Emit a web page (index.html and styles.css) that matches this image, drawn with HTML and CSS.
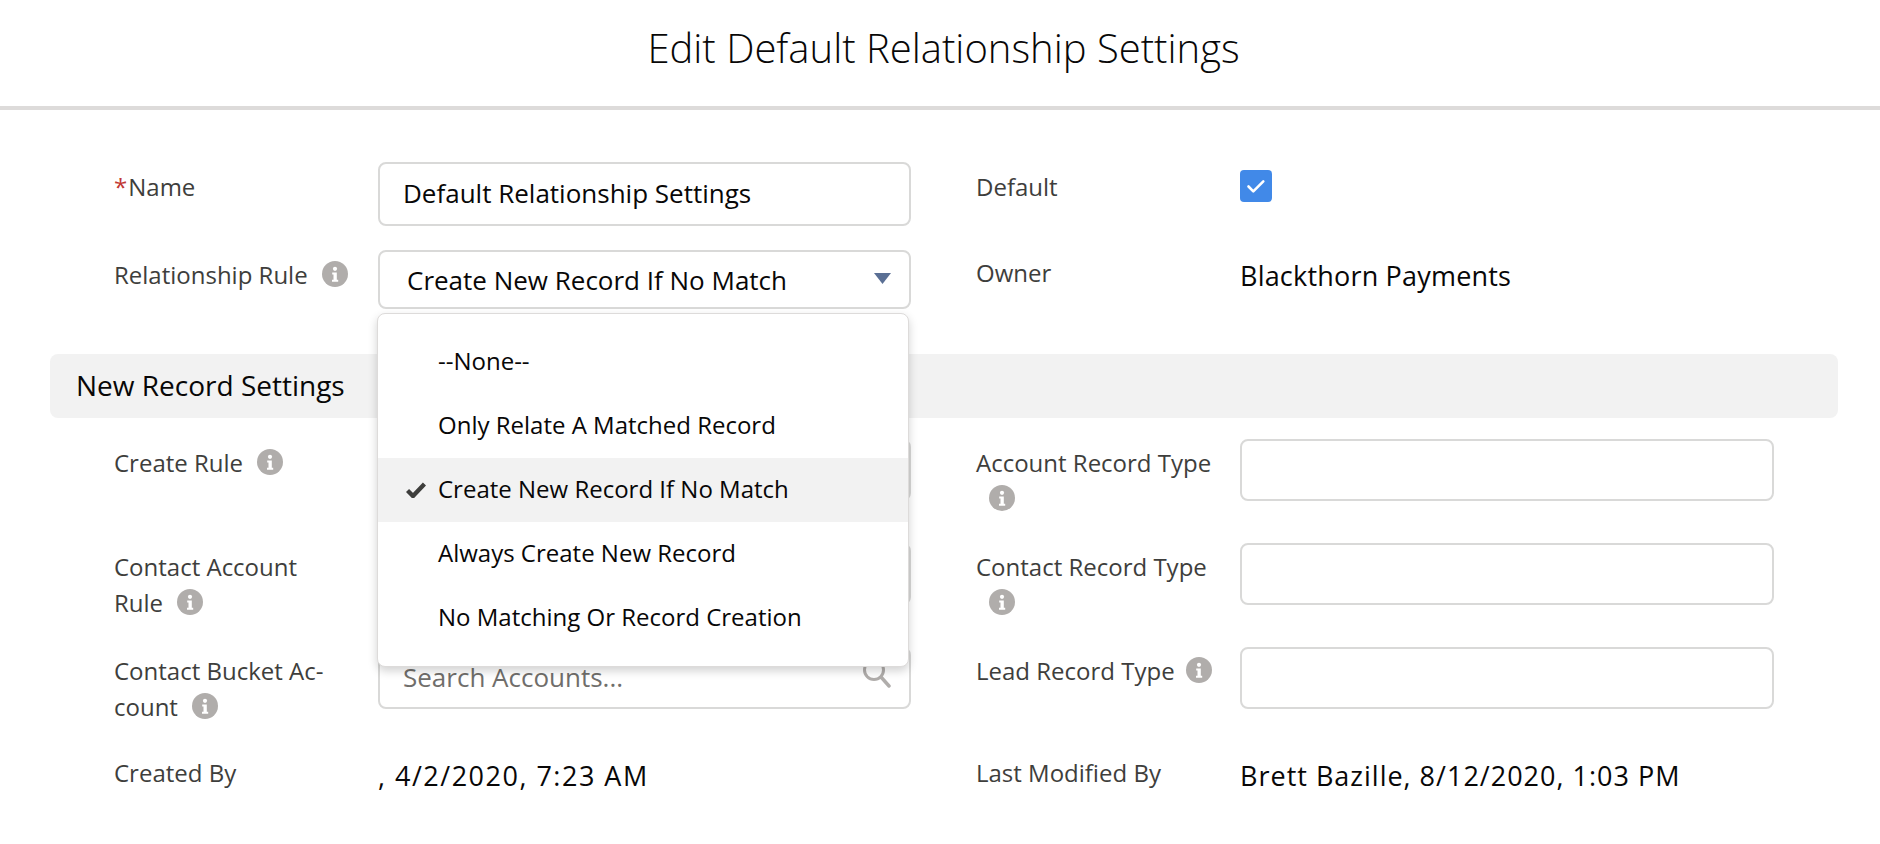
FILE: index.html
```html
<!DOCTYPE html>
<html lang="en">
<head>
    <meta charset="UTF-8">
    <title>Edit Default Relationship Settings</title>
    <link rel="stylesheet" href="styles.css">
</head>
<body>
    <svg class="sprite" width="0" height="0">
        <symbol id="info" viewBox="0 0 26 26">
            <circle cx="13" cy="13" r="13" fill="#b0adab"/>
            <circle cx="13" cy="7.8" r="2.1" fill="#fff"/>
            <path d="M10.2 11.4h4.6v7.4h1.4v2h-6.2v-2h1.5v-5.4h-1.3z" fill="#fff"/>
        </symbol>
    </svg>

    <div class="header">
        <h1>Edit Default Relationship Settings</h1>
    </div>

    <div class="row row-name">
        <div class="field">
            <div class="label"><span class="required">*</span>Name</div>
            <div class="input value-text">Default Relationship Settings</div>
        </div>
        <div class="field">
            <div class="label">Default</div>
            <div class="checkbox">
                <svg viewBox="0 0 32 32" width="32" height="32"><path d="M8.5 16.5l4.8 4.8 10-10" fill="none" stroke="#fff" stroke-width="2.6" stroke-linecap="round" stroke-linejoin="round"/></svg>
            </div>
        </div>
    </div>

    <div class="row row-rule">
        <div class="field">
            <div class="label">Relationship Rule <svg class="info"><use href="#info"/></svg></div>
            <div class="control">
                <div class="input select value-text">
                    Create New Record If No Match
                    <svg class="caret" viewBox="0 0 17 11" width="17" height="11"><path d="M0 0h17l-8.5 11z" fill="#5a6f94"/></svg>
                </div>
                <ul class="menu">
                    <li>--None--</li>
                    <li>Only Relate A Matched Record</li>
                    <li class="selected">
                        <svg class="tick" viewBox="0 0 20 16" width="20" height="16"><path d="M1.5 8.5l5.5 5.5 11.5-12" fill="none" stroke="#3e3e3c" stroke-width="4.4"/></svg>
                        Create New Record If No Match
                    </li>
                    <li>Always Create New Record</li>
                    <li>No Matching Or Record Creation</li>
                </ul>
            </div>
        </div>
        <div class="field">
            <div class="label">Owner</div>
            <div class="value">Blackthorn Payments</div>
        </div>
    </div>

    <div class="section">New Record Settings</div>

    <div class="row row-input">
        <div class="field">
            <div class="label">Create Rule <svg class="info"><use href="#info"/></svg></div>
            <div class="input"></div>
        </div>
        <div class="field">
            <div class="label">Account Record Type <svg class="info info-wrapped"><use href="#info"/></svg></div>
            <div class="input"></div>
        </div>
    </div>

    <div class="row row-input">
        <div class="field">
            <div class="label">Contact Account<br>Rule <svg class="info"><use href="#info"/></svg></div>
            <div class="input"></div>
        </div>
        <div class="field">
            <div class="label">Contact Record Type <svg class="info info-wrapped"><use href="#info"/></svg></div>
            <div class="input"></div>
        </div>
    </div>

    <div class="row row-input">
        <div class="field">
            <div class="label">Contact Bucket Ac-<br>count <svg class="info"><use href="#info"/></svg></div>
            <div class="input search">
                Search Accounts...
                <svg class="search-icon" viewBox="0 0 28 30" width="28" height="30"><circle cx="11" cy="11" r="9.5" fill="none" stroke="#b0adab" stroke-width="3"/><path d="M18 18l8 9" fill="none" stroke="#b0adab" stroke-width="3.4" stroke-linecap="round"/></svg>
            </div>
        </div>
        <div class="field">
            <div class="label">Lead Record Type <svg class="info info-lead"><use href="#info"/></svg></div>
            <div class="input"></div>
        </div>
    </div>

    <div class="row row-meta">
        <div class="field">
            <div class="label">Created By</div>
            <div class="value date created">, 4/2/2020, 7:23 AM</div>
        </div>
        <div class="field">
            <div class="label">Last Modified By</div>
            <div class="value date">Brett Bazille, 8/12/2020, 1:03 PM</div>
        </div>
    </div>
</body>
</html>
```

FILE: styles.css
```css
body {
    font-family: "Open Sans", "Liberation Sans", sans-serif;
    margin: 0;
    background-color: #fff;
    color: #080707;
}
.sprite {
    position: absolute;
}
.header {
    height: 106px;
    border-bottom: 4px solid #dddbda;
    display: flex;
    justify-content: center;
    align-items: center;
}
.header h1 {
    margin: 0 0 12px 7px;
    font-size: 40px;
    font-weight: 300;
}
.row {
    display: grid;
    grid-template-columns: 797px 798px;
    column-gap: 65px;
    padding-left: 114px;
}
.row-name {
    margin-top: 52px;
    height: 64px;
}
.row-rule {
    margin-top: 24px;
    height: 59px;
}
.row-input {
    height: 62px;
    margin-bottom: 42px;
}
.row-meta {
    margin-top: -2px;
}
.field {
    display: grid;
    grid-template-columns: 264px 1fr;
    align-items: start;
    min-width: 0;
}
.label {
    padding: 6px 16px 0 0;
    font-size: 24px;
    line-height: 36px;
    color: #3e3e3c;
}
.row-name .label {
    padding-top: 7px;
}
.row-rule .label {
    padding-top: 5px;
}
.row-rule .field:first-child .label {
    padding-top: 7px;
}
.required {
    color: #c23934;
    margin-right: 1px;
}
.info {
    width: 26px;
    height: 26px;
    margin-left: 8px;
    vertical-align: -3px;
}
.info-wrapped {
    margin-left: 13px;
}
.info-lead {
    margin-left: 5px;
}
.control {
    position: relative;
}
.input {
    box-sizing: border-box;
    height: 62px;
    border: 2px solid #d9d9d8;
    border-radius: 8px;
    background-color: #fff;
    display: flex;
    align-items: center;
    padding: 0 24px 0 23px;
}
.row-name .input {
    height: 64px;
    padding-bottom: 3px;
}
.row-rule .input {
    height: 59px;
}
.value-text {
    font-size: 26px;
}
.select {
    padding-left: 27px;
    justify-content: space-between;
}
.caret {
    margin-right: -6px;
    margin-top: -2px;
}
.value {
    padding-top: 8px;
    font-size: 27px;
    line-height: 36px;
    letter-spacing: 0.2px;
}
.date {
    padding-top: 9px;
    letter-spacing: 1px;
}
.created {
    letter-spacing: 1.5px;
}
.checkbox {
    width: 32px;
    height: 32px;
    margin-top: 8px;
    border-radius: 4px;
    background-color: #4189e8;
}
.checkbox svg {
    display: block;
}
.menu {
    position: absolute;
    z-index: 2;
    top: 63px;
    left: -1px;
    width: 532px;
    height: 354px;
    box-sizing: border-box;
    margin: 0;
    padding: 16px 0;
    list-style: none;
    background-color: #fff;
    border: 1px solid #dddbda;
    border-radius: 8px;
    box-shadow: 0 4px 10px rgba(0, 0, 0, 0.18);
    font-size: 24px;
}
.menu li {
    position: relative;
    height: 64px;
    line-height: 62px;
    padding-left: 60px;
}
.menu .selected {
    background-color: #f2f2f2;
}
.tick {
    position: absolute;
    left: 28px;
    top: 24px;
}
.section {
    box-sizing: border-box;
    height: 64px;
    margin: 45px 42px 21px 50px;
    padding-left: 26px;
    background-color: #f2f2f2;
    border-radius: 8px;
    font-size: 28px;
    line-height: 62px;
}
.search {
    padding-bottom: 2px;
    font-size: 26px;
    color: #706e6b;
    justify-content: space-between;
}
.search-icon {
    margin-right: -6px;
    margin-top: -6px;
}
```
